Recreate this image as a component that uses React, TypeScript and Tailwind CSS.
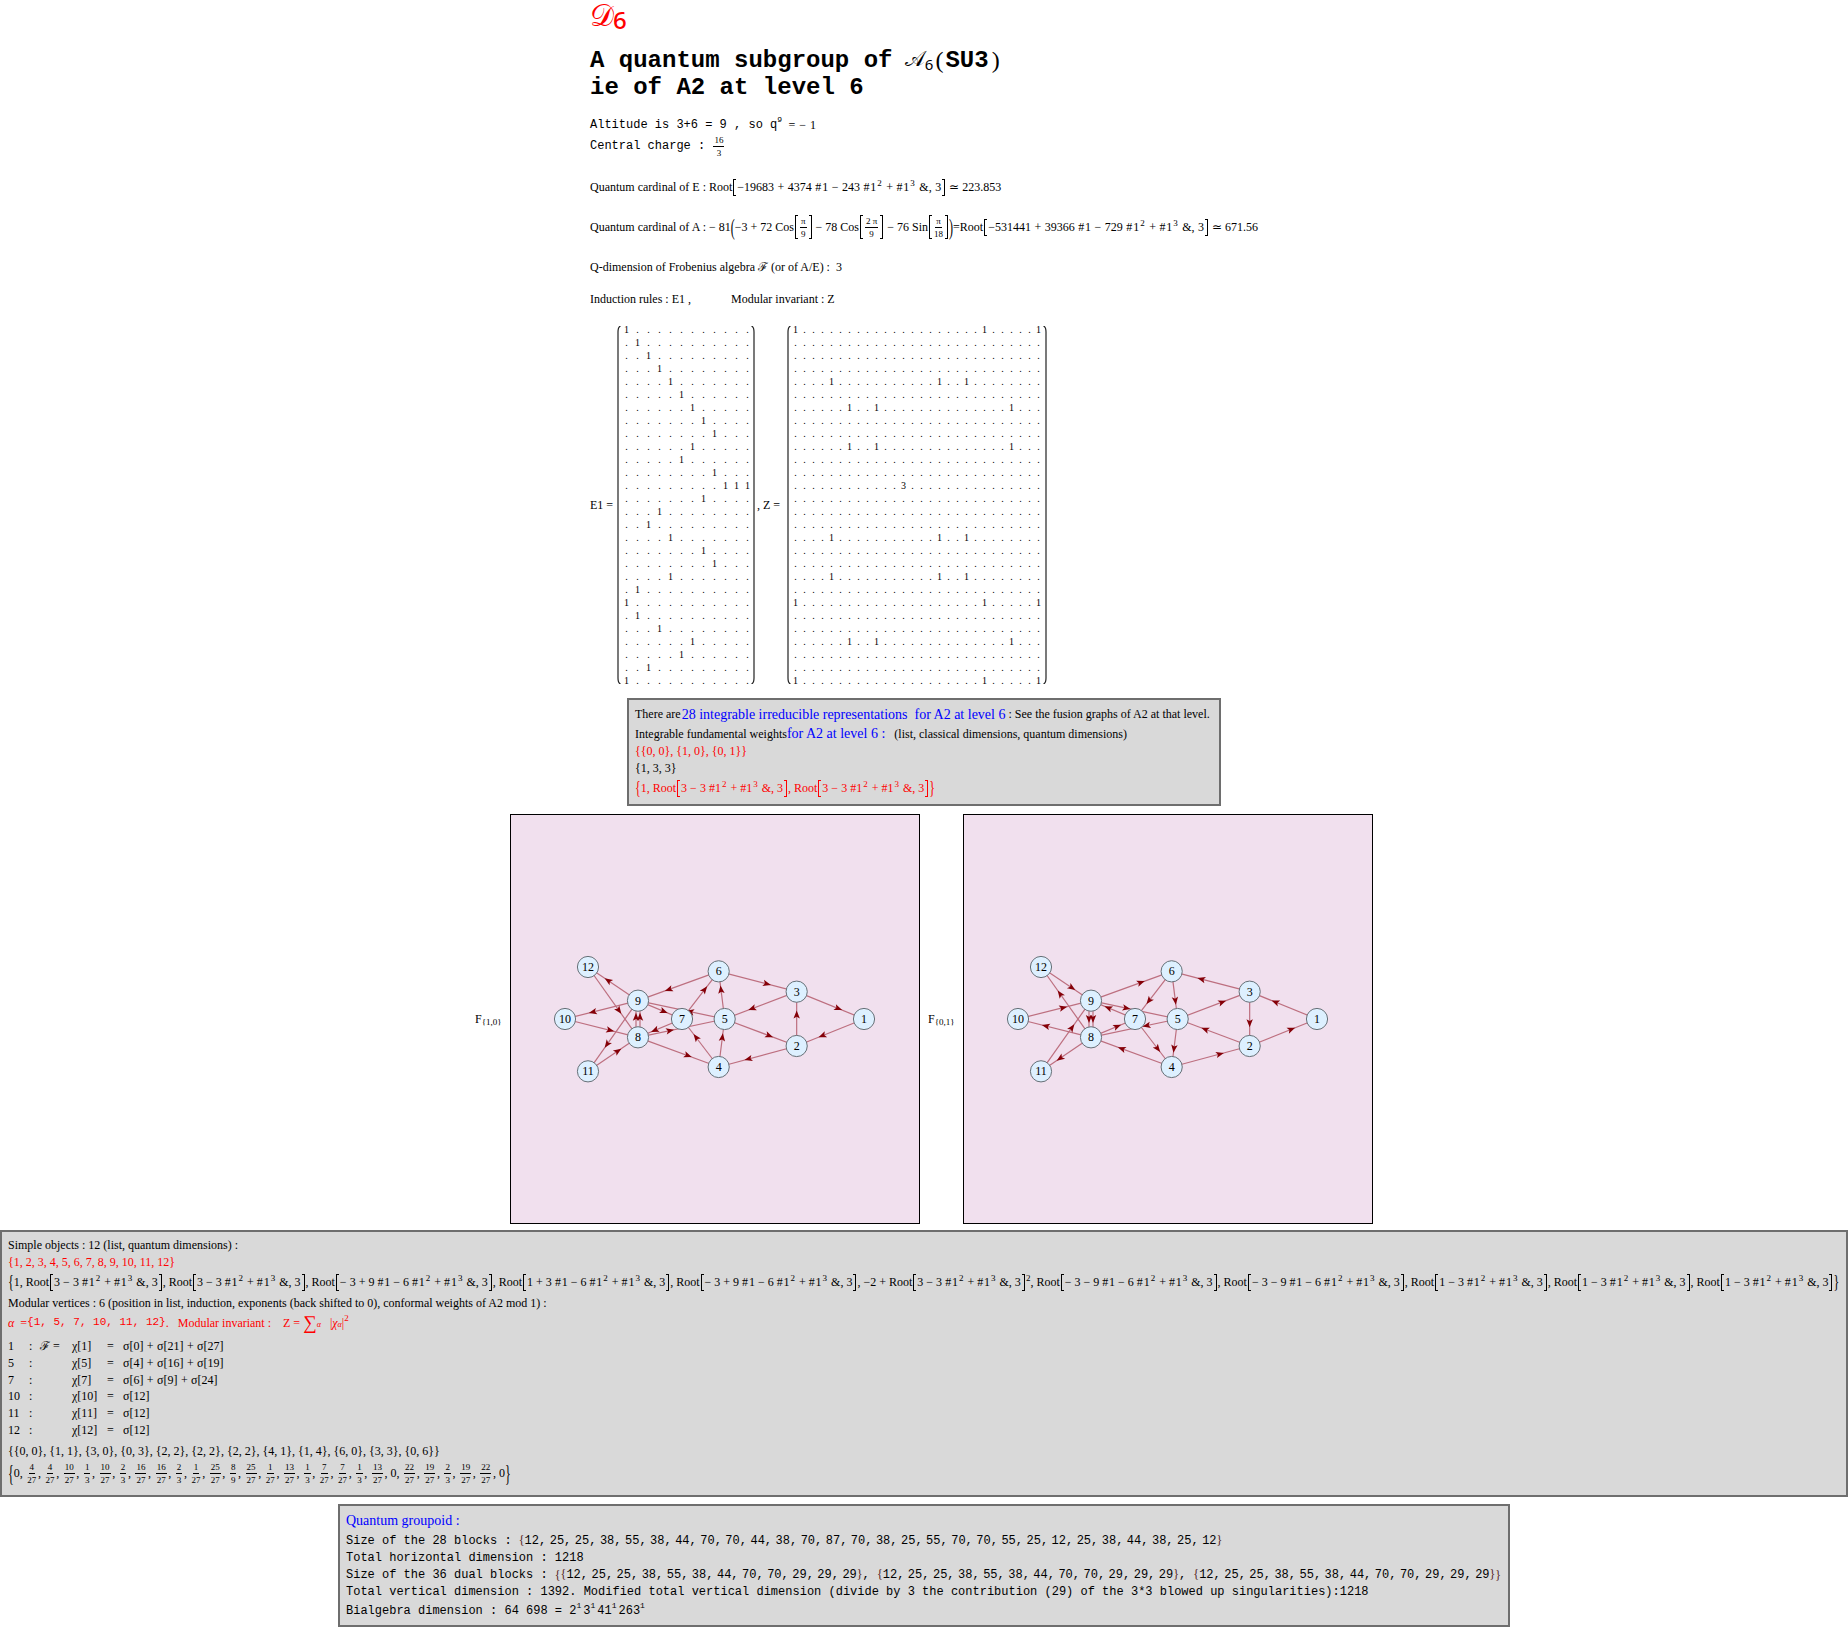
import type { ReactNode } from 'react';

const mono = "font-['Liberation_Mono',monospace]";
const serif = "font-['Liberation_Serif',serif]";

// tall thin brackets, as the formula renderer draws them
function Open({ h = 'h-[17px]' }: { h?: string }) {
  return <span className={`inline-block w-[3px] ${h} border-l border-y border-current align-middle mx-[1px]`} />;
}
function Close({ h = 'h-[17px]' }: { h?: string }) {
  return <span className={`inline-block w-[3px] ${h} border-r border-y border-current align-middle mx-[1px]`} />;
}
function Tall({ c, y = 'scale-y-[1.5]' }: { c: string; y?: string }) {
  return <span className={`inline-block ${y} font-light`}>{c}</span>;
}

function Expr({ s, tight }: { s: string; tight?: boolean }) {
  const parts = s.split(/\^(\d)|(#)/);
  return (
    <>
      {parts.map((p, i) => {
        if (p === undefined) return null;
        if (p === '#') return <span key={i} className={tight ? '' : 'tracking-[0.8px]'}>#</span>;
        if (/^\d$/.test(p) && i % 3 === 1) return <sup key={i} className="text-[9px] mx-[1px]">{p}</sup>;
        return <span key={i}>{p}</span>;
      })}
    </>
  );
}

function Root({ s, tight, wide }: { s: string; tight?: boolean; wide?: boolean }) {
  return (
    <span className={`whitespace-pre ${wide ? '[word-spacing:0.5px]' : ''}`}>
      Root<Open /><Expr s={s} tight={tight} /> &amp;, 3<Close />
    </span>
  );
}

function Frac({ n, d, gap = 'mx-[1px]' }: { n: ReactNode; d: ReactNode; gap?: string }) {
  return (
    <span className={`inline-flex flex-col items-center align-middle ${serif} text-[9px] leading-[10px] ${gap}`}>
      <span className="border-b border-black px-[1px] pb-[1px]">{n}</span>
      <span className="pt-[1px]">{d}</span>
    </span>
  );
}

function Paren({ flip = false, className = '' }: { flip?: boolean; className?: string }) {
  return (
    <svg width="6" height="358" viewBox="0 0 6 358" className={`shrink-0 ${flip ? '-scale-x-100' : ''} ${className}`}>
      <path d="M5.5 0 Q3 1 3 6 V352 Q3 357 5.5 358" fill="none" stroke="#222" strokeWidth="1.2" />
    </svg>
  );
}

const e1Rows = [[0], [1], [2], [3], [4], [5], [6], [7], [8], [6], [5], [8], [9, 10, 11], [7], [3], [2], [4], [7], [8], [4], [1], [0], [1], [3], [6], [5], [2], [0]];

function zCell(r: number, c: number) {
  const groups = [[0, 21, 27], [4, 16, 19], [6, 9, 24], [12]];
  for (const g of groups) {
    if (g.includes(r) && g.includes(c)) return g.length === 1 ? '3' : '1';
  }
  return '.';
}

function E1Matrix() {
  return (
    <div className="grid grid-cols-[repeat(12,11px)] auto-rows-[13px] text-[10px] leading-[13px] text-center text-black shrink-0">
      {e1Rows.flatMap((row, r) =>
        Array.from({ length: 12 }, (_, c) => <span key={`${r}-${c}`}>{row.includes(c) ? '1' : '.'}</span>)
      )}
    </div>
  );
}

function ZMatrix() {
  return (
    <div className="grid grid-cols-[repeat(28,9px)] auto-rows-[13px] text-[10px] leading-[13px] text-center text-black shrink-0">
      {Array.from({ length: 28 }).flatMap((_, r) =>
        Array.from({ length: 28 }, (_, c) => <span key={`${r}-${c}`}>{zCell(r, c)}</span>)
      )}
    </div>
  );
}

const nodes: Record<number, [number, number]> = {
  1: [972, 267],
  2: [770, 348],
  3: [770, 185],
  4: [536, 411],
  5: [554, 267],
  6: [536, 124],
  7: [426, 267],
  8: [294, 322],
  9: [294, 212],
  10: [75, 267],
  11: [144, 424],
  12: [144, 111],
};

type Edge = [number, number, number?, number?];

const edgesLeft: Edge[] = [
  [1, 2], [2, 3, 0.58], [2, 4], [3, 1], [3, 5], [5, 2], [5, 6], [4, 5], [4, 7], [6, 3], [6, 9], [7, 6],
  [5, 9, 0.4], [9, 7, 0.59], [7, 8], [8, 5, 0.37], [8, 9, 0.56, -2], [8, 9, 0.56, 2], [9, 10], [10, 8],
  [9, 12, 0.6], [12, 8], [9, 11], [11, 8, 0.6], [8, 4],
];

const edgesRight: Edge[] = [
  [2, 1], [1, 3], [3, 2, 0.58], [4, 2], [5, 3], [2, 5], [6, 5], [5, 4], [7, 4], [3, 6], [9, 6], [6, 7],
  [9, 5, 0.41], [7, 9, 0.61], [8, 7, 0.6], [5, 8, 0.36], [9, 8, 0.5, -2], [9, 8, 0.5, 2], [10, 9], [8, 10],
  [12, 9], [8, 12], [11, 9], [8, 11], [4, 8],
];

function Graph({ edges }: { edges: Edge[] }) {
  const pos = (n: number): [number, number] => [29 + nodes[n][0] / 3, 115 + nodes[n][1] / 3];
  return (
    <svg viewBox="0 0 408 408" className="block w-full h-full">
      {edges.map(([a, b, t = 0.62, off = 0], i) => {
        const [ax, ay] = pos(a);
        const [bx, by] = pos(b);
        const len = Math.hypot(bx - ax, by - ay);
        const dx = (bx - ax) / len;
        const dy = (by - ay) / len;
        const ox = -dy * off;
        const oy = dx * off;
        const px = ax + (bx - ax) * t + ox;
        const py = ay + (by - ay) * t + oy;
        const tri = [
          [px + dx * 4, py + dy * 4],
          [px - dx * 4 - dy * 3.2, py - dy * 4 + dx * 3.2],
          [px - dx * 2.2, py - dy * 2.2],
          [px - dx * 4 + dy * 3.2, py - dy * 4 - dx * 3.2],
        ]
          .map((q) => q.join(','))
          .join(' ');
        return (
          <g key={i}>
            <line x1={ax + ox} y1={ay + oy} x2={bx + ox} y2={by + oy} stroke="#bd6f7f" strokeWidth="1.2" />
            <polygon points={tri} fill="#850008" />
          </g>
        );
      })}
      {Object.keys(nodes).map((k) => {
        const [x, y] = pos(Number(k));
        return (
          <g key={k}>
            <circle cx={x} cy={y} r="10.6" fill="#ddf0ff" stroke="#667077" strokeWidth="1" />
            <text x={x} y={y + 4} textAnchor="middle" fontSize="12" fill="#000" fontFamily="Liberation Serif, serif">{k}</text>
          </g>
        );
      })}
    </svg>
  );
}

function GraphPanel({ sub, edges }: { sub: string; edges: Edge[] }) {
  return (
    <div className="flex items-center">
      <div className="w-[35px] text-[12px]">
        F<sub className="text-[9px]">{sub}</sub>
      </div>
      <div className="w-[410px] h-[410px] border border-black bg-[#f1e0ee]">
        <Graph edges={edges} />
      </div>
    </div>
  );
}

function NumList({ items }: { items: number[] }) {
  return (
    <span className={mono}>
      <span className={`${serif} text-[#552222]`}>{'{'}</span>
      {items.map((n, i) => (
        <span key={i}>
          {n}
          {i < items.length - 1 && <span className="inline-block w-[10.7px]">,</span>}
        </span>
      ))}
      <span className={`${serif} text-[#552222]`}>{'}'}</span>
    </span>
  );
}

const blocks = [12, 25, 25, 38, 55, 38, 44, 70, 70, 44, 38, 70, 87, 70, 38, 25, 55, 70, 70, 55, 25, 12, 25, 38, 44, 38, 25, 12];
const dual = [12, 25, 25, 38, 55, 38, 44, 70, 70, 29, 29, 29];

const weights: [number, number][] = [
  [0, 1], [4, 27], [4, 27], [10, 27], [1, 3], [10, 27], [2, 3], [16, 27], [16, 27], [2, 3], [1, 27], [25, 27], [8, 9], [25, 27],
  [1, 27], [13, 27], [1, 3], [7, 27], [7, 27], [1, 3], [13, 27], [0, 1], [22, 27], [19, 27], [2, 3], [19, 27], [22, 27], [0, 1],
];

const chiRows = [
  ['1', true, 'χ[1]', 'σ[0] + σ[21] + σ[27]'],
  ['5', false, 'χ[5]', 'σ[4] + σ[16] + σ[19]'],
  ['7', false, 'χ[7]', 'σ[6] + σ[9] + σ[24]'],
  ['10', false, 'χ[10]', 'σ[12]'],
  ['11', false, 'χ[11]', 'σ[12]'],
  ['12', false, 'χ[12]', 'σ[12]'],
] as const;

export default function App() {
  return (
    <div className={`w-[1848px] h-[1645px] bg-white text-black ${serif} text-[12px] overflow-hidden`}>
      {/* header column */}
      <div className="pl-[590px]">
        <div className="h-[32px] flex items-center text-[#ff0000]">
          <span className="text-[30px] leading-[36px]">𝒟</span>
          <span className="text-[24px] font-medium font-['Noto_Sans',sans-serif] leading-none mt-[8px] -ml-[1px]">6</span>
        </div>
        <div className={`${mono} mt-[15px] text-[24px] leading-[27px] font-bold`}>
          <div className="flex items-center whitespace-pre h-[27px]">
            A quantum subgroup of <span className="font-normal text-[21px] -ml-[2px]">𝒜</span>
            <span className="font-['Noto_Sans',sans-serif] font-normal text-[15px] mt-[8px]">6</span>
            <span className={`font-normal ${serif} ml-[2px] mr-[2px]`}>(</span>SU3<span className={`font-normal ${serif} ml-[3px]`}>)</span>
          </div>
          <div>ie of A2 at level 6</div>
        </div>
        <div className={`${mono} mt-[14px] h-[20px] flex items-center whitespace-pre`}>
          Altitude is 3+6 = 9 , so q<sup className="text-[8px] -mt-[2px]">9</sup>
          <span className={`${serif} ml-[3px] tracking-[0.5px]`}> = − 1</span>
        </div>
        <div className={`${mono} h-[22px] flex items-center whitespace-pre`}>
          Central charge : <Frac n="16" d="3" />
        </div>
        <div className="mt-[20px] h-[20px] flex items-center whitespace-pre">
          Quantum cardinal of E : <Root wide s="−19683 + 4374 #1 − 243 #1^2 + #1^3" /> ≃ 223.853
        </div>
        <div className="mt-[16px] h-[28px] flex items-center whitespace-pre">
          Quantum cardinal of A : − 81<Tall c="(" y="scale-y-[2]" />−3 + 72 Cos<Open h="h-[24px]" /><Frac n="π" d="9" /><Close h="h-[24px]" /> − 78 Cos
          <Open h="h-[24px]" /><Frac n="2 π" d="9" /><Close h="h-[24px]" /> − 76 Sin<Open h="h-[24px]" /><Frac n="π" d="18" /><Close h="h-[24px]" />
          <Tall c=")" y="scale-y-[2]" />=<Root wide s="−531441 + 39366 #1 − 729 #1^2 + #1^3" /> ≃ 671.56
        </div>
        <div className="mt-[16px] h-[20px] flex items-center whitespace-pre">
          Q-dimension of Frobenius algebra <span>ℱ</span> (or of A/E) :  3
        </div>
        <div className="mt-[12px] h-[20px] flex items-center whitespace-pre">
          <span className="w-[141px]">Induction rules : E1 ,</span>
          <span>Modular invariant : Z</span>
        </div>
        <div className="mt-[14px] flex items-center h-[364px]">
          <span className="w-[25px] whitespace-pre">E1 =</span>
          <Paren />
          <E1Matrix />
          <Paren flip className="-ml-[2px]" />
          <span className="w-[28px] whitespace-pre">, Z =</span>
          <Paren />
          <ZMatrix />
          <Paren flip />
        </div>
      </div>

      {/* A2 representations */}
      <div className="mt-[11px] mx-auto w-[594px] h-[108px] border-2 border-[#6e6e6e] bg-[#d9d9d9] pl-[6px] pt-[4px] overflow-hidden">
        <div className="h-[20px] flex items-center whitespace-pre">
          There are<span className="text-[14px] text-[#0000ff] ml-[1px]">28 integrable irreducible representations  for A2 at level 6</span> : See the fusion graphs of A2 at that level.
        </div>
        <div className="h-[19px] flex items-center whitespace-pre">
          Integrable fundamental weights<span className="text-[14px] text-[#0000ff]">for A2 at level 6 :</span>   (list, classical dimensions, quantum dimensions)
        </div>
        <div className="h-[16px] flex items-center text-[#ff0000]">{'{{0, 0}, {1, 0}, {0, 1}}'}</div>
        <div className="h-[17px] flex items-center">{'{1, 3, 3}'}</div>
        <div className="h-[24px] flex items-center whitespace-pre text-[#ff0000]">
          <Tall c="{" /><span>1, </span><Root tight s="3 − 3 #1^2 + #1^3" /><span>, </span><Root tight s="3 − 3 #1^2 + #1^3" /><Tall c="}" />
        </div>
      </div>

      {/* fusion graphs */}
      <div className="mt-[8px] flex justify-center gap-[8px]">
        <GraphPanel sub="{1,0}" edges={edgesLeft} />
        <GraphPanel sub="{0,1}" edges={edgesRight} />
      </div>

      {/* simple objects */}
      <div className="mt-[6px] w-full h-[267px] border-2 border-[#6e6e6e] bg-[#d9d9d9] pl-[6px] pt-[4px] overflow-hidden">
        <div className="h-[17px] flex items-center">Simple objects : 12 (list, quantum dimensions) :</div>
        <div className="h-[17px] flex items-center text-[#ff0000]">{'{1, 2, 3, 4, 5, 6, 7, 8, 9, 10, 11, 12}'}</div>
        <div className="h-[24px] flex items-center whitespace-pre">
          <Tall c="{" />1, <Root s="3 − 3 #1^2 + #1^3" />, <Root s="3 − 3 #1^2 + #1^3" />, <Root s="− 3 + 9 #1 − 6 #1^2 + #1^3" />, <Root s="1 + 3 #1 − 6 #1^2 + #1^3" />, <Root s="− 3 + 9 #1 − 6 #1^2 + #1^3" />, −2 + <Root s="3 − 3 #1^2 + #1^3" /><sup className="text-[9px]">2</sup>, <Root s="− 3 − 9 #1 − 6 #1^2 + #1^3" />, <Root s="− 3 − 9 #1 − 6 #1^2 + #1^3" />, <Root s="1 − 3 #1^2 + #1^3" />, <Root s="1 − 3 #1^2 + #1^3" />, <Root s="1 − 3 #1^2 + #1^3" /><Tall c="}" />
        </div>
        <div className="h-[17px] flex items-center">Modular vertices : 6 (position in list, induction, exponents (back shifted to 0), conformal weights of A2 mod 1) :</div>
        <div className="h-[23px] flex items-center whitespace-pre text-[#ff0000]">
          <span className="italic">α</span>  =
          <span className={`${mono} text-[11px] font-medium`}>{'{1, 5, 7, 10, 11, 12}'}</span>.   Modular invariant :    Z = <span className="text-[19px] leading-none">∑</span><sub className="text-[8px] italic">α</sub>   |<span className="italic">χ</span><sub className="text-[8px] italic">α</sub>|<sup className="text-[9px]">2</sup>
        </div>
        <div className="mt-[3px]">
          {chiRows.map(([id, algebra, chi, sigma]) => (
            <div key={id} className="grid grid-cols-[21px_11px_32px_35px_16px_1fr] h-[16.8px] items-center whitespace-pre">
              <span>{id}</span>
              <span>:</span>
              <span>{algebra && <><span>ℱ</span> =</>}</span>
              <span>{chi}</span>
              <span>=</span>
              <span className="[word-spacing:0.4px]">{sigma}</span>
            </div>
          ))}
        </div>
        <div className="mt-[5px] h-[17px] flex items-center">{'{{0, 0}, {1, 1}, {3, 0}, {0, 3}, {2, 2}, {2, 2}, {2, 2}, {4, 1}, {1, 4}, {6, 0}, {3, 3}, {0, 6}}'}</div>
        <div className="h-[27px] flex items-center whitespace-pre">
          <Tall c="{" y="scale-y-[2]" />
          {weights.map(([n, d], i) => (
            <span key={i} className="flex items-center">
              {d === 1 ? n : <Frac n={n} d={d} gap="mx-[1.6px]" />}
              {i < weights.length - 1 && ', '}
            </span>
          ))}
          <Tall c="}" y="scale-y-[2]" />
        </div>
      </div>

      {/* quantum groupoid */}
      <div className="mt-[7px] mx-auto w-[1172px] h-[123px] border-2 border-[#6e6e6e] bg-[#d9d9d9] pl-[6px] pt-[3px] overflow-hidden">
        <div className="h-[23px] flex items-center text-[14px] text-[#0000ff]">Quantum groupoid :</div>
        <div className={`${mono} whitespace-pre`}>
          <div className="h-[17px] flex items-center">Size of the 28 blocks : <NumList items={blocks} /></div>
          <div className="h-[17px] flex items-center">Total horizontal dimension : 1218</div>
          <div className="h-[17px] flex items-center">
            Size of the 36 dual blocks : <span className={`${serif} text-[#552222]`}>{'{'}</span>
            <NumList items={dual} />, <NumList items={dual} />, <NumList items={dual} />
            <span className={`${serif} text-[#552222]`}>{'}'}</span>
          </div>
          <div className="h-[17px] flex items-center">Total vertical dimension : 1392. Modified total vertical dimension (divide by 3 the contribution (29) of the 3*3 blowed up singularities):1218</div>
          <div className="h-[22px] flex items-center">
            Bialgebra dimension : 64 698 = 2<sup className="text-[8px] -mt-[3px] mr-[2px]">1</sup>3<sup className="text-[8px] -mt-[3px] mr-[2px]">1</sup>41<sup className="text-[8px] -mt-[3px] mr-[2px]">1</sup>263<sup className="text-[8px] -mt-[3px]">1</sup>
          </div>
        </div>
      </div>
    </div>
  );
}
